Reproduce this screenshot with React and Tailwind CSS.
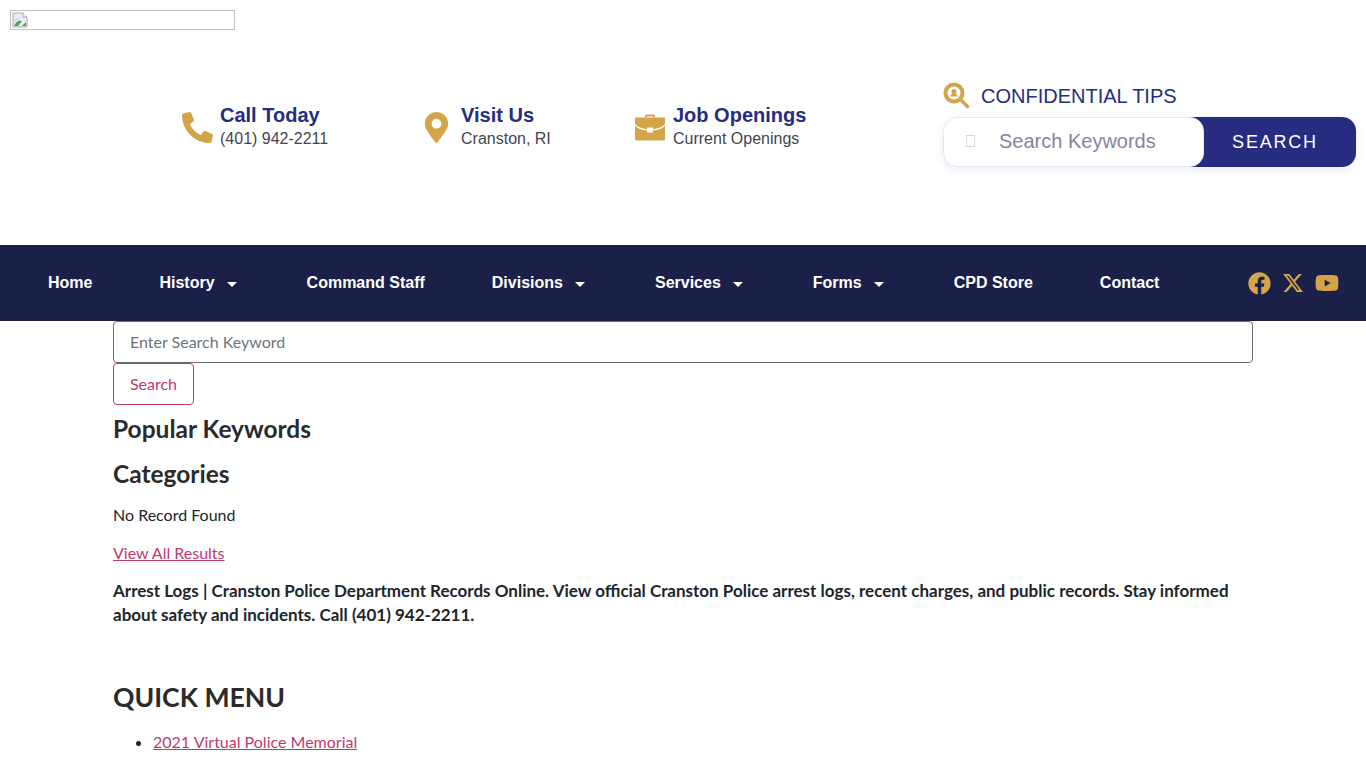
import React from "react";
import { FaPhoneAlt, FaMapMarkerAlt, FaFacebook, FaYoutube } from "react-icons/fa";
import { FaXTwitter } from "react-icons/fa6";

const arial = "font-['Liberation_Sans',Arial,sans-serif]";

function Caret() {
  return <span className="mr-[3px] ml-[12px] inline-block h-0 w-0 translate-y-px border-x-[5.500px] border-t-[5px] border-x-transparent border-t-white" />;
}

function Info({ icon, title, sub, className }) {
  return (
    <div className={`flex items-center ${className}`}>
      {icon}
      <div className="flex flex-col">
        <span className="text-[20px] leading-[24px] font-bold text-[#262d80]">{title}</span>
        <span className="text-[16px] leading-[24px] text-[#444450]">{sub}</span>
      </div>
    </div>
  );
}

function BrokenImage() {
  return (
    <svg width="16" height="16" viewBox="0 0 16 16" className="mt-px ml-px">
      <path d="M1 1h10l4 4v10H1z" fill="#e8eef8" stroke="#a8a8a8" />
      <path d="M11 1v4h4" fill="#fff" stroke="#a8a8a8" />
      <path d="M2 14c2-5 5-6 8-5l-4 5z" fill="#4fa34a" />
      <path d="M2 8c2-2 5-2 7-1-3 0-5 1-7 3z" fill="#c5d8f2" />
      <path d="M10 14l4-4v4z" fill="#4fa34a" />
    </svg>
  );
}

function Briefcase() {
  return (
    <svg width="30" height="28" viewBox="0 0 30 27" className="mr-[8px]">
      <path d="M10 4V2.500A1.500 1.500 0 0 1 11.500 1h7A1.500 1.500 0 0 1 20 2.500V4h-2V3h-6v1z" fill="#d4a548" />
      <path d="M1 4h28c.6 0 1 .4 1 1v4c0 3-3 4-5 5-2 .8-5 1.500-7 1.700V14h-6v1.700C10 15.500 7 14.800 5 14c-2-1-5-2-5-5V5c0-.6.400-1 1-1z" fill="#d4a548" />
      <path d="M0 12c2 3 7 4.500 12 5v2h6v-2c5-.5 10-2 12-5v13.500c0 .8-.7 1.500-1.500 1.500h-27C.7 27 0 26.300 0 25.500z" fill="#d4a548" />
    </svg>
  );
}

function TipsIcon() {
  return (
    <svg width="27" height="27" viewBox="0 0 27 27">
      <circle cx="11" cy="11" r="10.500" fill="#d4a548" />
      <circle cx="11" cy="11" r="6.500" fill="#fff" />
      <circle cx="11" cy="9.500" r="2.500" fill="#d4a548" />
      <path d="M7 14.500c1-2.500 2.500-3 4-3s3 .5 4 3z" fill="#d4a548" />
      <path d="M19 19l5.500 5.500" stroke="#d4a548" strokeWidth="3.500" strokeLinecap="round" />
    </svg>
  );
}

const nav = [
  ["Home", false],
  ["History", true],
  ["Command Staff", false],
  ["Divisions", true],
  ["Services", true],
  ["Forms", true],
  ["CPD Store", false],
  ["Contact", false],
];

export default function App() {
  return (
    <div className="h-[768px] overflow-hidden bg-white font-['Lato',sans-serif] text-[16px] text-[#212529]">
      <header className={`h-[245px] ${arial}`}>
        <div className="pt-[10px] pl-[10px]">
          <div className="h-[20px] w-[225px] border border-[#c0c0c0]">
            <BrokenImage />
          </div>
        </div>
        <div className="flex items-start pt-[48px] pl-[181px]">
          <div className="flex pt-[25px]">
            <Info className="w-[244px]" title="Call Today" sub="(401) 942-2211" icon={<FaPhoneAlt className="mr-[7px] ml-px text-[31px] text-[#d4a548]" />} />
            <Info className="w-[210px]" title="Visit Us" sub="Cranston, RI" icon={<FaMapMarkerAlt className="mr-[9px] ml-[-4px] text-[31px] text-[#d4a548]" />} />
            <Info className="w-[308px]" title="Job Openings" sub="Current Openings" icon={<Briefcase />} />
          </div>
          <div className="flex w-[413px] flex-col">
            <div className="flex h-[39px] items-start pt-[4px]">
              <TipsIcon />
              <span className="ml-[11px] text-[20px] leading-[28px] text-[#262d80]">CONFIDENTIAL TIPS</span>
            </div>
            <div className="flex h-[50px] rounded-[14px] shadow-[0_3px_8px_rgba(60,70,160,0.1)]">
              <div className="relative z-10 flex w-[261px] items-center rounded-[14px] border border-[#e6e7f2] bg-white pb-[2px] pl-[22px]">
                <span className="h-[12px] w-[9px] border border-[#d8d8de]" />
                <span className="ml-[24px] text-[20px] text-[#85859a]">Search Keywords</span>
              </div>
              <div className="-ml-[14px] flex flex-1 items-center justify-center rounded-r-[14px] bg-[#262d80] pl-[4px] text-[18px] tracking-[1.800px] text-white">SEARCH</div>
            </div>
          </div>
        </div>
      </header>

      <nav className={`flex h-[76px] items-center bg-[#1a2048] pl-[48px] text-[16px] font-bold text-white ${arial}`}>
        <div className="flex gap-[67px]">
          {nav.map(([label, caret]) => (
            <span key={label} className="flex items-center">
              {label}
              {caret && <Caret />}
            </span>
          ))}
        </div>
        <div className="ml-[89px] flex items-center gap-[11px] text-[#d4a548]">
          <FaFacebook className="text-[23px]" />
          <FaXTwitter className="text-[22px]" />
          <FaYoutube className="text-[24px]" />
        </div>
      </nav>

      <main className="mx-[113px] w-[1140px]">
        <div className="flex h-[42px] items-center rounded-[4px] border border-[#6c6c74] px-4 text-[#6c757d]">Enter Search Keyword</div>
        <div className="flex h-[42px] w-[81px] items-center justify-center rounded-[4px] border border-[#bd3a6f] text-[#bd3a6f]">Search</div>
        <h4 className="mt-[9px] text-[24.500px] leading-[29px] font-bold text-[#2b2b2b]">Popular Keywords</h4>
        <h4 className="mt-[16px] text-[24.500px] leading-[29px] font-bold text-[#2b2b2b]">Categories</h4>
        <p className="mt-[15px] leading-[24px]">No Record Found</p>
        <p className="mt-[14px] leading-[24px]">
          <a className="text-[#bd3a6f] underline">View All Results</a>
        </p>
        <p className="mt-[14px] text-[17px] leading-[24px] font-bold">
          Arrest Logs | Cranston Police Department Records Online. View official Cranston Police arrest logs, recent charges, and public records. Stay informed about safety and incidents. Call (401) 942-2211.
        </p>
        <h3 className="mt-[53px] text-[26.600px] leading-[34px] font-bold text-[#2b2b2b]">QUICK MENU</h3>
        <ul className="mt-[16px] list-disc pl-[40px]">
          <li className="leading-[24px]">
            <a className="text-[#bd3a6f] underline">2021 Virtual Police Memorial</a>
          </li>
        </ul>
      </main>
    </div>
  );
}
